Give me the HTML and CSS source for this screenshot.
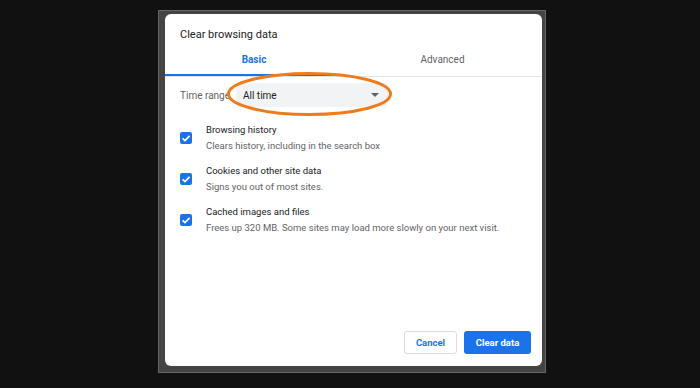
FILE: index.html
```html
<!DOCTYPE html>
<html lang="en">
<head>
  <meta charset="UTF-8" />
  <meta name="viewport" content="width=device-width, initial-scale=1.0" />
  <title>Clear browsing data</title>
  <link rel="stylesheet" href="styles.css">
</head>
<body>
  <div class="frame">
    <div class="dialog">
      <h1 class="title">Clear browsing data</h1>

      <div class="tabs">
        <div class="tab tab-basic active">Basic</div>
        <div class="tab tab-advanced">Advanced</div>
      </div>

      <div class="range-row">
        <span class="range-label">Time range</span>
        <div class="select">
          <span>All time</span>
          <span class="arrow"></span>
        </div>
      </div>

      <div class="options">
        <div class="option">
          <span class="checkbox">
            <svg width="12" height="12" viewBox="0 0 12 12"><path d="M2.6 6.3 L5 8.6 L9.6 3.8" fill="none" stroke="#fff" stroke-width="1.7"/></svg>
          </span>
          <div class="option-text">
            <div class="option-title">Browsing history</div>
            <div class="option-sub">Clears history, including in the search box</div>
          </div>
        </div>
        <div class="option">
          <span class="checkbox">
            <svg width="12" height="12" viewBox="0 0 12 12"><path d="M2.6 6.3 L5 8.6 L9.6 3.8" fill="none" stroke="#fff" stroke-width="1.7"/></svg>
          </span>
          <div class="option-text">
            <div class="option-title">Cookies and other site data</div>
            <div class="option-sub">Signs you out of most sites.</div>
          </div>
        </div>
        <div class="option">
          <span class="checkbox">
            <svg width="12" height="12" viewBox="0 0 12 12"><path d="M2.6 6.3 L5 8.6 L9.6 3.8" fill="none" stroke="#fff" stroke-width="1.7"/></svg>
          </span>
          <div class="option-text">
            <div class="option-title">Cached images and files</div>
            <div class="option-sub">Frees up 320 MB. Some sites may load more slowly on your next visit.</div>
          </div>
        </div>
      </div>

      <div class="actions">
        <button class="btn btn-cancel">Cancel</button>
        <button class="btn btn-clear">Clear data</button>
      </div>

      <!-- hand drawn highlight over the time range -->
      <svg class="highlight" width="170" height="46" viewBox="0 0 170 46">
        <ellipse cx="84.5" cy="22" rx="81" ry="20.5" fill="none" stroke="#f07b1c" stroke-width="3"/>
      </svg>
    </div>
  </div>
</body>
</html>
```

FILE: styles.css
```css
* {
  box-sizing: border-box;
  margin: 0;
  padding: 0;
  font-family: Roboto, "Liberation Sans", Arial, sans-serif;
}

body {
  background: #111111;
  padding: 10px 0 0 158px;
  width: 700px;
  height: 388px;
  overflow: hidden;
}

.frame {
  width: 388px;
  height: 363px;
  background: #444;
  border: 1px solid #666;
  padding: 3px 3px 6px 6px;
}

.dialog {
  position: relative;
  width: 377px;
  height: 352px;
  background: #ffffff;
  border-radius: 6px;
  display: flex;
  flex-direction: column;
}

.title {
  font-size: 11px;
  font-weight: normal;
  line-height: 14px;
  color: #202124;
  padding: 14px 0 0 15px;
}

.tabs {
  display: flex;
  border-bottom: 1px solid #e3e3e3;
}

.tab {
  text-align: center;
  font-size: 10px;
  line-height: 12px;
  padding: 12px 0 8px;
  color: #5f6368;
  border-bottom: 2px solid transparent;
}

.tab-basic {
  width: 178px;
}

.tab-advanced {
  flex: 1;
}

.tab.active {
  color: #1a73e8;
  font-weight: bold;
  border-bottom-color: #1a73e8;
}

.range-row {
  display: flex;
  align-items: center;
  margin-top: 6px;
  padding-left: 15px;
  height: 24px;
}

.range-label {
  width: 56px;
  font-size: 10px;
  color: #5f6368;
}

.select {
  width: 152px;
  height: 24px;
  background: #f1f3f4;
  border-radius: 4px;
  display: flex;
  align-items: center;
  justify-content: space-between;
  padding: 0 9px 0 7px;
  font-size: 10px;
  color: #202124;
}

.arrow {
  width: 0;
  height: 0;
  border-left: 4px solid transparent;
  border-right: 4px solid transparent;
  border-top: 4px solid #5f6368;
}

.options {
  display: flex;
  flex-direction: column;
  gap: 11px;
  margin-top: 16px;
  padding-left: 15px;
}

.option {
  display: flex;
  align-items: center;
  gap: 14px;
}

.checkbox {
  width: 12px;
  height: 12px;
  border-radius: 2px;
  background: #1a73e8;
  display: flex;
}

.option-title {
  font-size: 9.5px;
  line-height: 14px;
  color: #202124;
}

.option-sub {
  font-size: 9.5px;
  line-height: 14px;
  margin-top: 2px;
  color: #5f6368;
}

.actions {
  margin-top: auto;
  display: flex;
  justify-content: flex-end;
  gap: 7px;
  padding: 0 11px 12px 0;
}

.btn {
  height: 23px;
  border-radius: 3px;
  font-size: 9.5px;
  font-weight: bold;
  cursor: pointer;
}

.btn-cancel {
  width: 53px;
  background: #ffffff;
  color: #1a73e8;
  border: 1px solid #dadce0;
}

.btn-clear {
  width: 67px;
  background: #1a73e8;
  color: #ffffff;
  border: none;
}

.highlight {
  position: absolute;
  left: 60px;
  top: 58px;
}
```
